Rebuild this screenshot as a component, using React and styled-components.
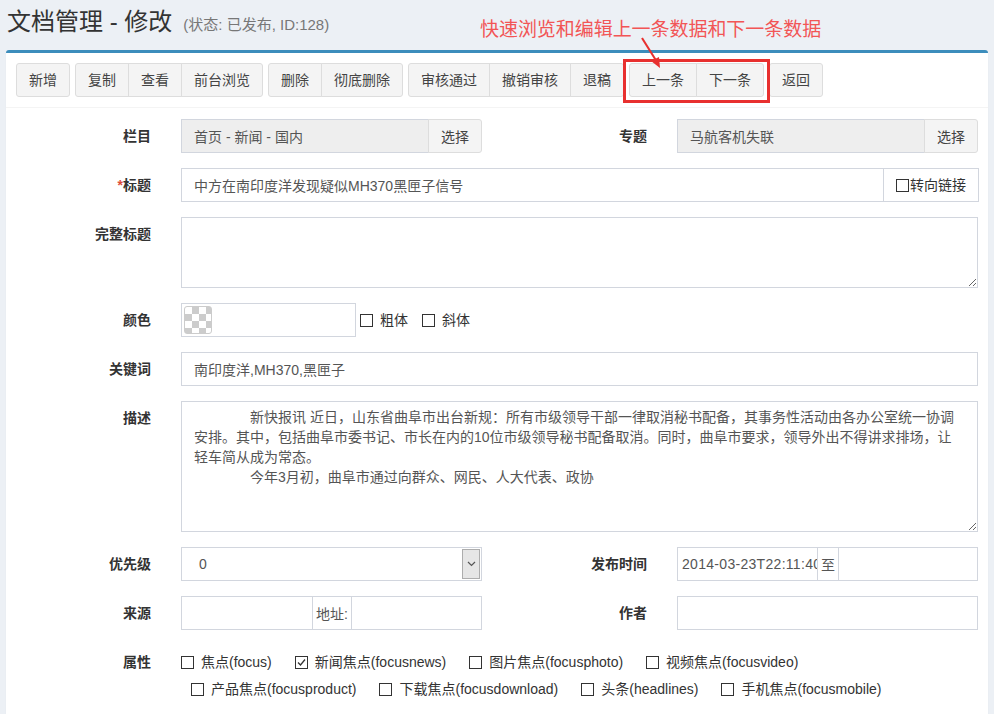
import React from 'react'
import styled, { createGlobalStyle } from 'styled-components'

const GlobalStyle = createGlobalStyle`
  body {
    margin: 0;
    background: #ecf0f5;
    font-family: "Liberation Sans", "Noto Sans CJK SC", sans-serif;
    font-size: 14px;
    color: #333;
  }
  * { box-sizing: border-box; }
`

const Page = styled.div`
  position: relative;
  padding: 0 6px;
  height: 714px;
  overflow: hidden;
`

const Header = styled.div`
  display: flex;
  align-items: baseline;
  height: 50px;
  padding: 8px 1px 0;
`

const Title = styled.h1`
  margin: 0;
  font-size: 24px;
  line-height: 28px;
  font-weight: 400;
  color: #333;
`

const Sub = styled.small`
  margin-left: 11px;
  font-size: 15px;
  color: #777;
`

const Box = styled.div`
  background: #fff;
  border-top: 3px solid #3c8dbc;
  border-radius: 3px;
  box-shadow: 0 1px 1px rgba(0, 0, 0, 0.1);
`

const Toolbar = styled.div`
  display: flex;
  gap: 5px;
  padding: 10px;
  border-bottom: 1px solid #f4f4f4;
`

const BtnGroup = styled.div`
  display: flex;
`

const Btn = styled.button`
  font: inherit;
  font-size: 14px;
  line-height: 20px;
  padding: 6px 12px;
  background: #f4f4f4;
  border: 1px solid #ddd;
  color: #444;
  border-radius: 0;
  & + & { margin-left: -1px; }
  &:first-child { border-radius: 3px 0 0 3px; }
  &:last-child { border-radius: 0 3px 3px 0; }
  &:only-child { border-radius: 3px; }
`

const Form = styled.div`
  display: grid;
  grid-template-columns: 135px minmax(0, 1fr) 135px minmax(0, 1fr);
  column-gap: 30px;
  row-gap: 15px;
  padding: 11px 10px 20px;
  align-items: start;
`

const Label = styled.div`
  text-align: right;
  font-weight: 700;
  padding-top: 7px;
  line-height: 20px;
  color: #333;
`

const Star = styled.span`
  color: #dd4b39;
`

const Field = styled.div`
  display: flex;
  align-items: center;
  min-width: 0;
  grid-column: ${p => (p.$full ? '2 / -1' : 'auto')};
`

const Input = styled.input`
  font: inherit;
  flex: ${p => (p.$width ? `0 0 ${p.$width}px` : '1 1 0')};
  width: 0;
  min-width: 0;
  height: 34px;
  padding: 6px ${p => (p.$tight ? '0 6px 4px' : '12px')};
  border: 1px solid #d2d6de;
  border-radius: 0;
  color: #555;
  letter-spacing: ${p => (p.$tight ? '0.3px' : 'normal')};
  background: ${p => (p.readOnly ? '#eee' : '#fff')};
  outline: none;
`

const PickBtn = styled.button`
  font: inherit;
  height: 34px;
  padding: 6px 12px;
  margin-left: -1px;
  background: #f4f4f4;
  border: 1px solid #ddd;
  border-radius: 0 3px 3px 0;
  color: #444;
`

const Addon = styled.span`
  display: flex;
  align-items: center;
  justify-content: center;
  height: 34px;
  padding: 6px ${p => p.$pad || 3}px;
  margin: 0 -1px;
  border: 1px solid #d2d6de;
  background: #fff;
  color: #555;
  white-space: nowrap;
  position: relative;
`

const TextArea = styled.textarea`
  font: inherit;
  flex: 1;
  width: 0;
  height: ${p => p.$h}px;
  padding: 5px 12px;
  line-height: 20px;
  border: 1px solid #d2d6de;
  color: #555;
  outline: none;
`

const ColorInput = styled.div`
  display: flex;
  align-items: center;
  width: 175px;
  height: 34px;
  padding: 2px;
  border: 1px solid #d2d6de;
`

const Swatch = styled.span`
  width: 28px;
  height: 28px;
  border: 1px solid #ccc;
  border-radius: 3px;
  background: repeating-conic-gradient(#ccc 0 25%, #fff 0 50%) 0 0 / 14px 14px;
`

const Box13 = styled.span`
  display: inline-flex;
  align-items: center;
  justify-content: center;
  width: 13px;
  height: 13px;
  border: 1px solid #333;
  background: #fff;
  flex: none;
`

const Check = styled.label`
  display: inline-flex;
  align-items: center;
  gap: ${p => p.$gap ?? 7}px;
  line-height: 20px;
  color: #333;
  white-space: nowrap;
  margin-left: ${p => p.$ml || 0}px;
`

const Select = styled.div`
  flex: 1;
  display: flex;
  align-items: center;
  height: 34px;
  padding: 1px;
  border: 1px solid #d2d6de;
  color: #555;
`

const SelectValue = styled.span`
  flex: 1;
  padding-left: 16px;
`

const ArrowBox = styled.span`
  display: flex;
  align-items: center;
  justify-content: center;
  width: 18px;
  height: 100%;
  background: #e6e6e6;
  border: 1px solid #adadad;
`

const Attrs = styled.div`
  grid-column: 2 / -1;
  display: flex;
  flex-wrap: wrap;
  row-gap: 7px;
  padding-top: 7px;
`

const Attr = styled(Check)`
  margin: 0 13px 0 10px;
  &:first-child { margin-left: 0; }
`

const Note = styled.div`
  position: absolute;
  left: 480px;
  top: 17px;
  font-size: 19px;
  line-height: 26px;
  color: #f25555;
  letter-spacing: -0.05px;
`

const ArrowSvg = styled.svg`
  position: absolute;
  left: 630px;
  top: 34px;
`

const Highlight = styled.div`
  position: absolute;
  left: 623px;
  top: 59px;
  width: 147px;
  height: 44px;
  border: 3px solid #e8302f;
`

const CheckBox = ({ checked }) => (
  <Box13>
    {checked && (
      <svg width="11" height="11" viewBox="0 0 11 11">
        <path d="M2 5.5 L4.5 8 L9 2.5" fill="none" stroke="#333" strokeWidth="1.3" />
      </svg>
    )}
  </Box13>
)

const desc = `　　　　新快报讯 近日，山东省曲阜市出台新规：所有市级领导干部一律取消秘书配备，其事务性活动由各办公室统一协调安排。其中，包括曲阜市委书记、市长在内的10位市级领导秘书配备取消。同时，曲阜市要求，领导外出不得讲求排场，让轻车简从成为常态。
　　　　今年3月初，曲阜市通过向群众、网民、人大代表、政协`

const attrs = [
  ['焦点(focus)', false],
  ['新闻焦点(focusnews)', true],
  ['图片焦点(focusphoto)', false],
  ['视频焦点(focusvideo)', false],
  ['产品焦点(focusproduct)', false],
  ['下载焦点(focusdownload)', false],
  ['头条(headlines)', false],
  ['手机焦点(focusmobile)', false],
]

const groups = [
  ['新增'],
  ['复制', '查看', '前台浏览'],
  ['删除', '彻底删除'],
  ['审核通过', '撤销审核', '退稿'],
  ['上一条', '下一条'],
  ['返回'],
]

export default function App() {
  return (
    <>
      <GlobalStyle />
      <Page>
        <Header>
          <Title>文档管理 - 修改</Title>
          <Sub>(状态: 已发布, ID:128)</Sub>
        </Header>
        <Box>
          <Toolbar>
            {groups.map((g, i) => (
              <BtnGroup key={i}>
                {g.map(b => <Btn key={b}>{b}</Btn>)}
              </BtnGroup>
            ))}
          </Toolbar>
          <Form>
            <Label>栏目</Label>
            <Field>
              <Input readOnly defaultValue="首页 - 新闻 - 国内" />
              <PickBtn>选择</PickBtn>
            </Field>
            <Label>专题</Label>
            <Field>
              <Input readOnly defaultValue="马航客机失联" />
              <PickBtn>选择</PickBtn>
            </Field>

            <Label><Star>*</Star>标题</Label>
            <Field $full>
              <Input defaultValue="中方在南印度洋发现疑似MH370黑匣子信号" />
              <Addon $pad={12}>
                <Check $gap={1}><CheckBox />转向链接</Check>
              </Addon>
            </Field>

            <Label>完整标题</Label>
            <Field $full>
              <TextArea $h={71} />
            </Field>

            <Label>颜色</Label>
            <Field $full>
              <ColorInput><Swatch /></ColorInput>
              <Check $ml={4}><CheckBox />粗体</Check>
              <Check $ml={14}><CheckBox />斜体</Check>
            </Field>

            <Label>关键词</Label>
            <Field $full>
              <Input defaultValue="南印度洋,MH370,黑匣子" />
            </Field>

            <Label>描述</Label>
            <Field $full>
              <TextArea $h={131} defaultValue={desc} />
            </Field>

            <Label>优先级</Label>
            <Field>
              <Select>
                <SelectValue>0</SelectValue>
                <ArrowBox>
                  <svg width="9" height="6" viewBox="0 0 9 6">
                    <path d="M1 1 L4.5 4.5 L8 1" fill="none" stroke="#555" strokeWidth="1.2" />
                  </svg>
                </ArrowBox>
              </Select>
            </Field>
            <Label>发布时间</Label>
            <Field>
              <Input $width={141} $tight defaultValue="2014-03-23T22:11:40" />
              <Addon>至</Addon>
              <Input />
            </Field>

            <Label>来源</Label>
            <Field>
              <Input $width={132} />
              <Addon>地址:</Addon>
              <Input />
            </Field>
            <Label>作者</Label>
            <Field>
              <Input />
            </Field>

            <Label>属性</Label>
            <Attrs>
              {attrs.map(([t, c]) => (
                <Attr key={t}><CheckBox checked={c} />{t}</Attr>
              ))}
            </Attrs>
          </Form>
        </Box>

        <Note>快速浏览和编辑上一条数据和下一条数据</Note>
        <ArrowSvg width="40" height="40" viewBox="0 0 40 40">
          <line x1="12" y1="4" x2="27" y2="28" stroke="#e8302f" strokeWidth="2" />
          <polygon points="30,34 21,27 29,23" fill="#e8302f" />
        </ArrowSvg>
        <Highlight />
      </Page>
    </>
  )
}
